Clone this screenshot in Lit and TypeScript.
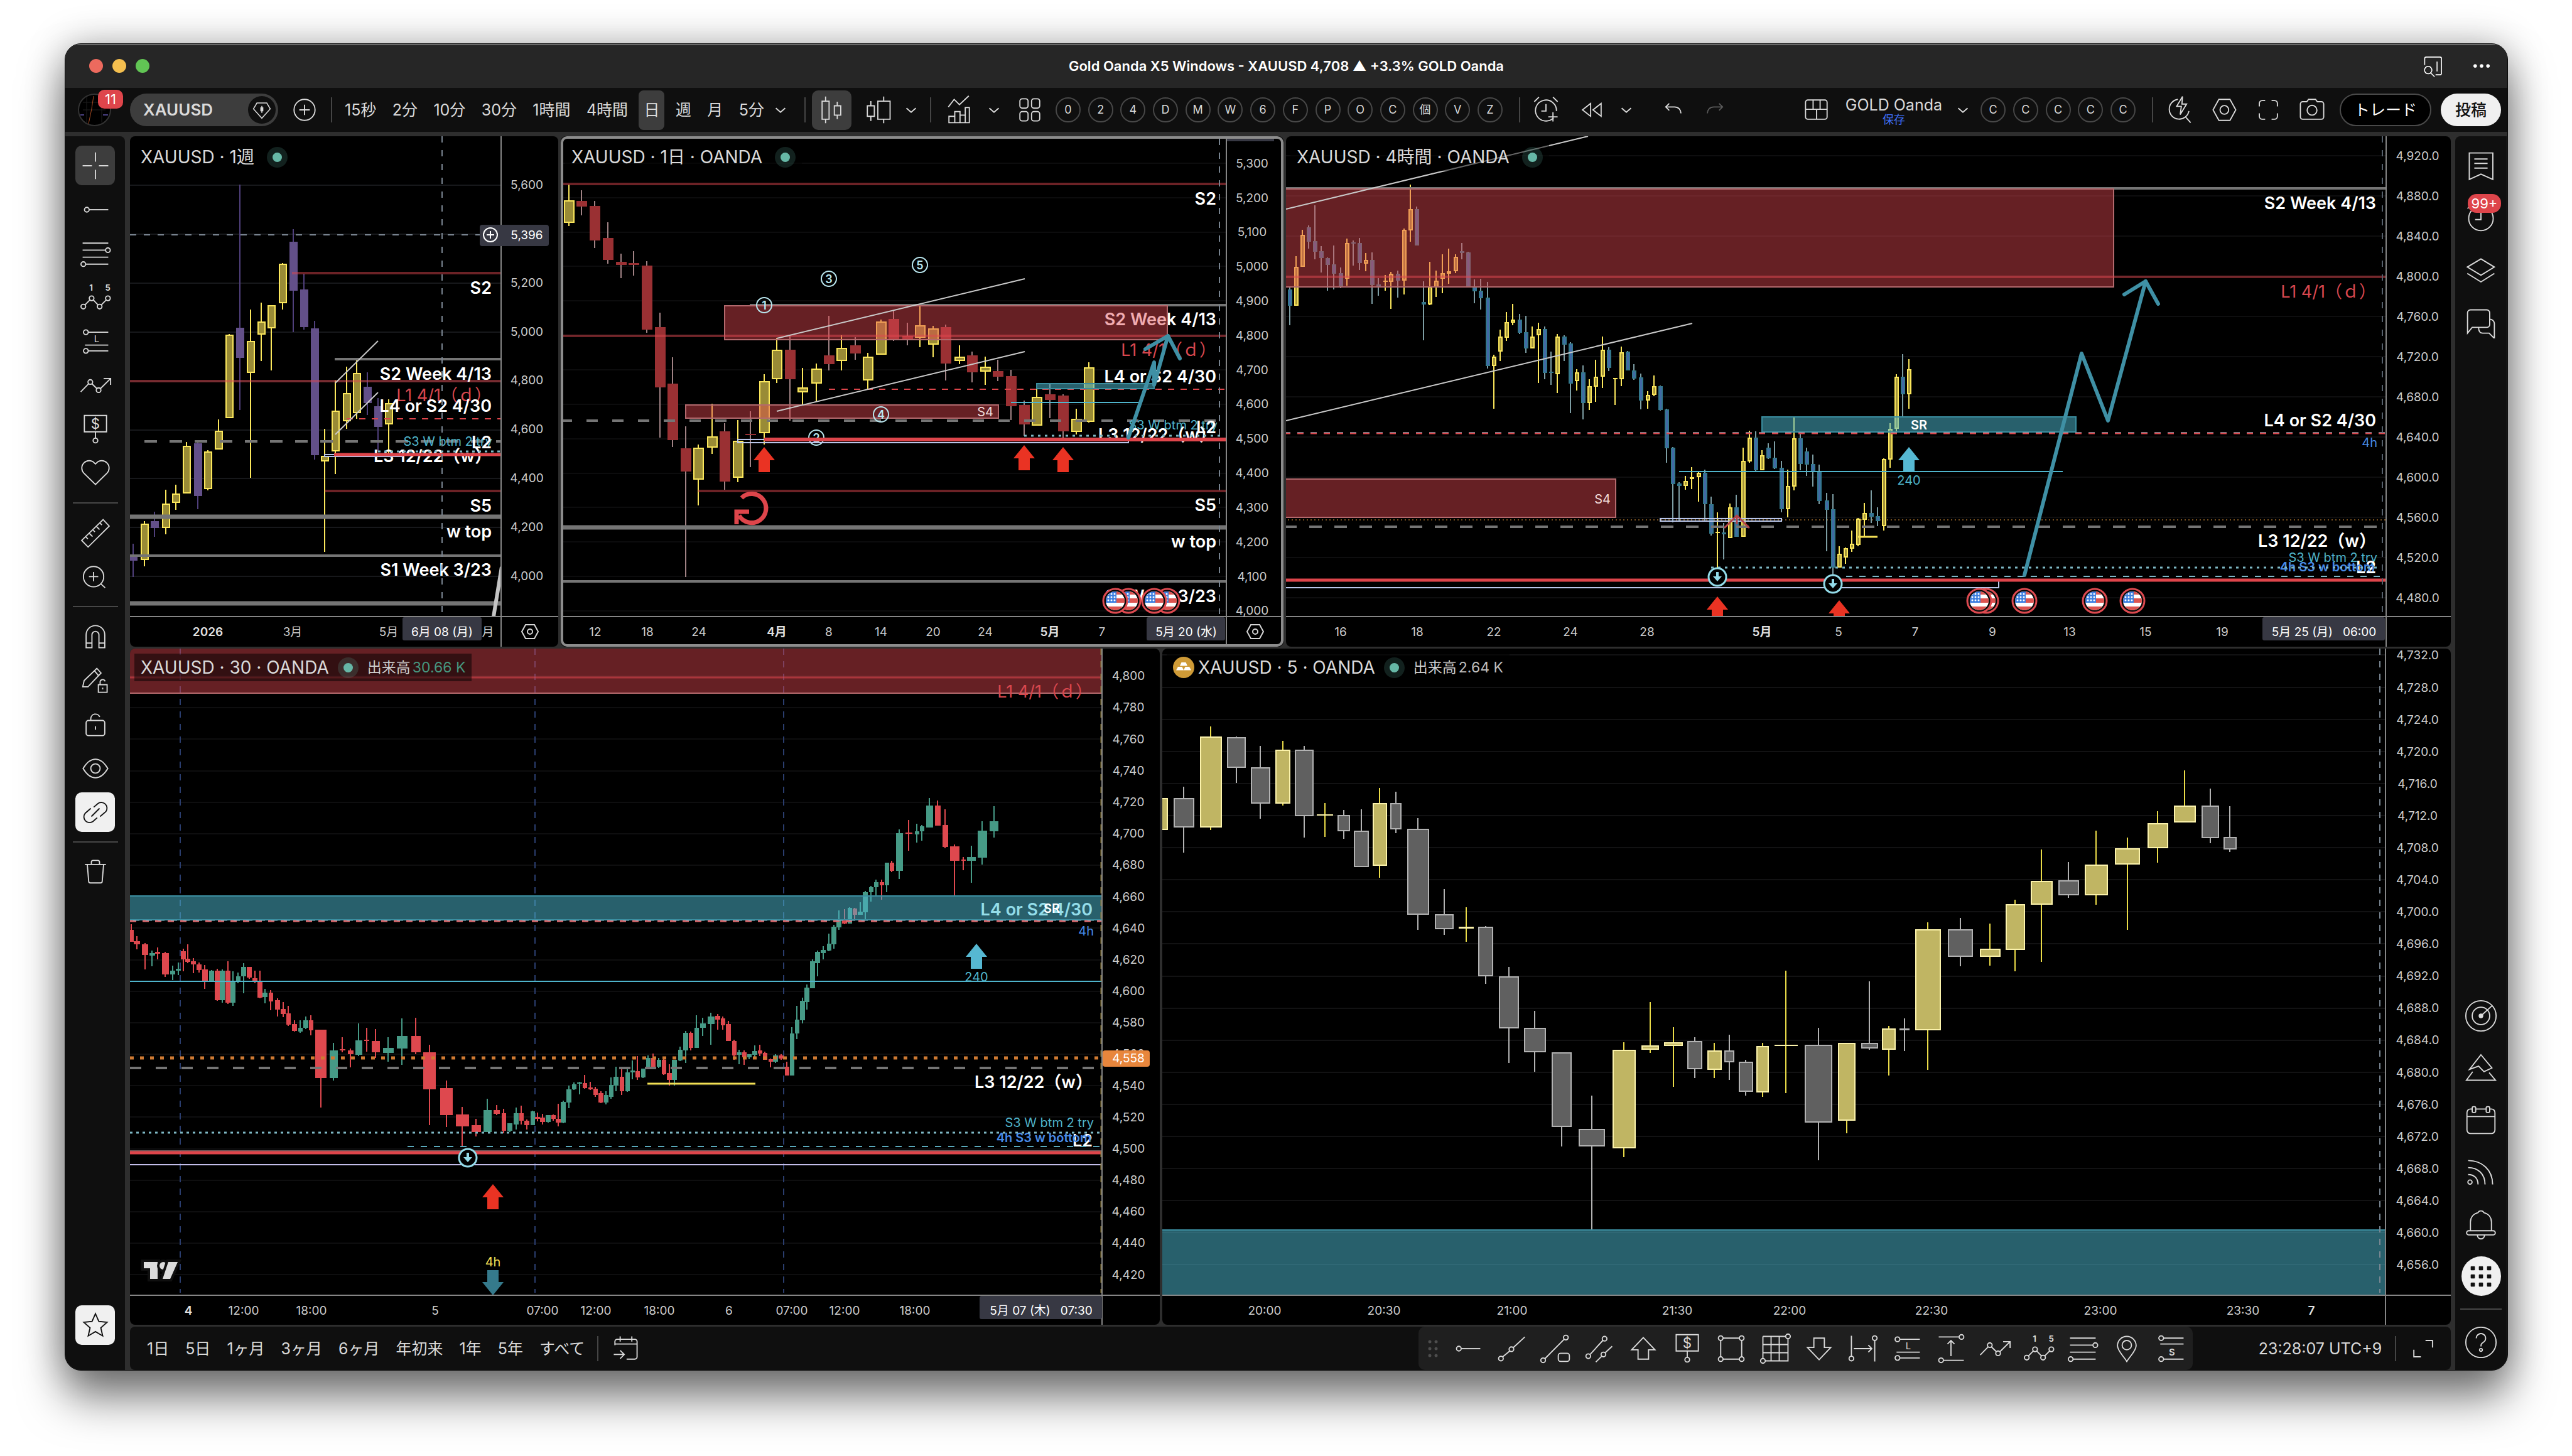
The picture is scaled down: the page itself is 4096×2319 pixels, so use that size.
import { LitElement, html, svg, css, nothing } from "lit";
import { customElement, property } from "lit/decorators.js";
import { classMap } from "lit/directives/class-map.js";

/* ---------- icons (28 unit grid) ---------- */

const dot = (x: number, y: number, r = 2) => svg`<circle cx=${x} cy=${y} r=${r} />`;
const p = (d: string) => svg`<path d=${d} />`;
const glyph = (x: number, y: number, size: number, text: string, weight = 400) =>
  svg`<text class="glyph" x=${x} y=${y} font-size=${size} font-weight=${weight} text-anchor="middle">${text}</text>`;

const ICONS: Record<string, unknown> = {
  cross: p("M3 14h8M17 14h8M14 2.5v8M14 17.5v8"),
  hray: svg`${dot(6.6, 14)}${p("M8.6 14H25")}`,
  fib: svg`${p("M3 5h22M3 11h19.7M3 17h22M5.6 23H25")}${dot(24.7, 11)}${dot(3.6, 23)}`,
  wave: svg`${glyph(10.2, 8, 7, "1", 700)}${glyph(24.6, 8, 7, "5", 700)}${dot(3.6, 21.7)}${dot(10.7, 14.6)}${dot(17.6, 21.7)}${dot(24.7, 14.6)}${p("M5 20.3l4.300-4.300M12.100 16l4.100 4.300M19 20.300l4.300-4.300")}`,
  longPos: svg`${dot(5.8, 6)}${dot(5.8, 22)}${p("M7.8 6H25M5 17h20M7.8 22H25")}${glyph(15, 14.5, 8, "L")}`,
  shortPos: svg`${dot(5.8, 5)}${dot(5.8, 23)}${p("M7.8 5H25M5 10h20M7.8 23H25")}${glyph(15, 20, 8, "S", 600)}`,
  path: svg`${p("M1.400 19.500L8.200 12.500M11 12.500L15.300 16.700M18.200 16.700L27 8M21 8h6v5.500")}${dot(9.6, 11)}${dot(16.7, 18)}`,
  price: svg`${p("M4.500 2h19v14h-19zM14 16v5.500")}${dot(14, 23.5)}${glyph(14, 13.2, 12, "$")}`,
  heart: p("M14 23.500L4.100 13.800a6.200 6.200 0 0 1 9-8.800l.9.9.9-.9a6.200 6.200 0 0 1 9 8.800z"),
  ruler: p("M20.600 2.500l5.200 5.500L7.700 26l-5.500-5.700zM5.500 17l2 2M8.500 14l3 3M11.500 11l2 2M14.500 8l3 3M17.500 5l2 2"),
  zoom: svg`${dot(12.4, 13.7, 8.7)}${p("M12.400 9.700v8M8.400 13.700h8M18.700 20l3.600 3.200")}`,
  magnet: p("M6 23.500V12.500a8 8 0 0 1 16 0v11h-5V12.500a3 3 0 0 0-6 0v11zM6 19.500h5M17 19.500h5"),
  penLock: svg`${p("M3.100 19.300L4.300 14 15.200 3.500l3.600 4L7.600 19.300zM13 5.500l3.700 4.200M16.500 17.500h7.500v6.500h-7.500zM18 17.500v-2a2.200 2.200 0 0 1 4.300-.8M20.200 20v1.500")}`,
  lock: svg`<rect x="6" y="10.500" width="16" height="13" rx="2" />${p("M10 10.500V9a4 4 0 0 1 7.700-1.500M14 15.500v3")}`,
  eye: svg`${p("M3.400 14c3-5 6.500-8 10.600-8s7.600 3 10.600 8c-3 5-6.500 8-10.600 8s-7.600-3-10.600-8z")}${dot(14, 14, 4)}`,
  link: p("M12.500 9.500l3.700-3.200a4.900 4.900 0 0 1 6.700 7L18 17.500M15.500 18.500l-3.700 3.300a4.900 4.900 0 0 1-6.700-7L10 10.500M10.500 17.500l7-7"),
  trash: p("M5 7.500h18M10.500 7.500v-2a1.500 1.500 0 0 1 1.500-1.500h4a1.500 1.500 0 0 1 1.500 1.500v2M7 7.500l1.200 14.300a1.500 1.500 0 0 0 1.500 1.500h8.600a1.500 1.500 0 0 0 1.500-1.500L21 7.500"),
  star: p("M14 4l2.900 6.600 7.100.7-5.400 4.700 1.600 7-6.200-3.700L7.800 23l1.600-7L4 11.300l7.100-.7z"),
  list: p("M4 3h20.200v22.700L14 21.200 4 25.700zM8.300 8.200h11.400M8.300 12h11.400M8.300 16h11.400"),
  clock: svg`${dot(14, 14.5, 10.5)}${p("M14 9v6.500H9M2.500 6l3-3")}`,
  layers: p("M14 4.500L2.300 11.500 14 18.500l11.500-7zM2.300 17L14 24.200 25.500 17"),
  chat: p("M2.500 23.500V6A2.500 2.500 0 0 1 5 3.500h14A2.500 2.500 0 0 1 21.500 6v10a2.500 2.500 0 0 1-2.500 2.500H6.500zM21.500 11.500a4 4 0 0 1 4 3.500v13l-4.500-4.500h-5.500c-2 0-3.500-1.500-3.500-4.500"),
  radar: svg`${dot(14, 14, 13)}${dot(14, 14, 7.5)}<circle cx="14" cy="14" r="2" class="solid" />${p("M14 14l9.500-8.700")}`,
  peak: p("M14 2.700l9.400 11.300-6.800 3.200L12 12.400l-7.800 2.800zM6.900 17.200L1.500 24.500h25L21 18"),
  calendar: svg`<rect x="2" y="4.500" width="24" height="21" rx="3" />${p("M2 11h24")}<rect class="cut" x="6.500" y="2.500" width="3" height="5" rx="1" /><rect class="cut" x="18.500" y="2.500" width="3" height="5" rx="1" />`,
  rss: svg`${dot(4.6, 22.5, 1.8)}${p("M3 16c5 0 8.500 3 8.500 8.500M3 10c8.500 0 14.500 5.500 14.500 14.500M3 4c12 0 21 8 21 20.500")}`,
  bell: p("M14 2.500a2.500 2.500 0 0 1 2.500 1.500c4 1 6.500 4 6.500 8v7.500H5V12c0-4 2.500-7 6.500-8A2.500 2.500 0 0 1 14 2.500zM3.500 19.500h21a1.800 1.800 0 0 1 0 3.600h-21a1.800 1.800 0 0 1 0-3.600zM11 23.500a3 3 0 0 0 6 0"),
  apps: svg`${[7, 14, 21].map((x) => [7, 14, 21].map((y) => svg`<rect class="solid" x=${x - 1.8} y=${y - 1.8} width="3.600" height="3.600" rx="0.600" />`))}`,
  help: svg`${dot(14, 14, 13)}${p("M10 10.500a4 4 0 1 1 6 3.500c-1.500 1-2 1.500-2 3.500")}${dot(14, 20.5, 1.2)}`,
  plus: svg`${dot(14, 14, 9)}${p("M14 9.500v9M9.500 14h9")}`,
  pen: svg`${p("M9 7h10l3.500 6L14 22.500 5.500 13z")}<path class="solid" d="M12.500 11.500h3v4h-3z" />${p("M14 10v7")}`,
  candles: p("M8.500 2.500v4M8.500 22v3.500M5.500 6.500h6v15.500h-6zM18.500 7v3.500M18.500 18v4M16 10.500h5.500v8H16z"),
  candlesWide: p("M8 6.500v4M8 19.500v4M5 10.500h6v9H5zM19 2.500v4M19 21.500v4M14 6.500h10.500v15.500H14z"),
  down: p("M10 12.500l4 3.500 4-3.500"),
  indicators: p("M5 11.500l5-6.500 4.500 4.500 8-7.500M5.500 25v-5.500h5V25zM10.500 20v-4.500h4.500V25M15 18.500h4.500V25M19.500 18.500V12H23v13H5.500"),
  templates: svg`${[5.5, 15.5].map((x) => [4.5, 15.5].map((y) => svg`<rect x=${x} y=${y} width="7" height="8" rx="2" />`))}`,
  alert: svg`${p("M20.500 20.800A9 9 0 1 1 23 15M14 9v6h-4M4 7l4-4M24 7l-4-4M20 16v8M16 20h8")}`,
  rewind: p("M13 8.500L6 14l7 5.500zM22 8.500L15 14l7 5.500z"),
  undo: p("M11.500 8.500L8.500 11.500 11.500 14.500M8.500 11.500h7.500c3.500 0 5.500 2.500 5.500 5.500"),
  redo: p("M16.500 8.500l3 3-3 3M19.500 11.500H12c-3.500 0-5.500 2.500-5.500 5.500"),
  layout: svg`<rect x="4.500" y="5.500" width="18.500" height="16.500" rx="2" />${p("M4.500 13.500h18.500M11 5.500v8M17 5.500v8M14 13.500v8.500")}`,
  quick: p("M12 5a8.500 8.500 0 1 0 9.500 10M18.500 20l4.500 5M16 2.500l-5 8.500h4l-1 7 5.500-9H15.500z"),
  hex: svg`${p("M9.500 5h9.500L24 14l-5 9H9.500L4.500 14z")}${dot(14.2, 14, 3.7)}`,
  full: p("M6.500 11V8.500a2.500 2.500 0 0 1 2.500-2.500h2.500M17 6h2.500A2.500 2.500 0 0 1 22 8.500V11M22 17v2.500a2.500 2.500 0 0 1-2.500 2.500H17M11.500 22H9a2.500 2.500 0 0 1-2.500-2.500V17"),
  camera: svg`${p("M6 7h3.500l1.500-2h6l1.500 2H22a2 2 0 0 1 2 2v11a2 2 0 0 1-2 2H6a2 2 0 0 1-2-2V9a2 2 0 0 1 2-2z")}${dot(14, 14.3, 4.2)}`,
  goto: p("M5 11V8a2 2 0 0 1 2-2h15a2 2 0 0 1 2 2v13a2 2 0 0 1-2 2h-7M5 10h19M9.500 3.500V8M19.500 3.500V8M4 19h9M9.500 15.500l3.500 3.500-3.500 3.500"),
  trend: svg`${dot(5, 22.5)}${dot(14, 14.5)}${p("M6.500 21L12.600 16M15.500 13.200L25.500 4")}`,
  trendBox: svg`${dot(3.5, 24)}${dot(23, 4.500)}${p("M5 22.600L21.500 6")}<rect x="16.500" y="18" width="9.500" height="7" rx="2" />`,
  channel: svg`${dot(4.5, 20.5)}${dot(18.5, 5.500)}${dot(17.5, 19)}${p("M6 19L17 7M11 25.500l5-5M19 17.500l6-5.500")}`,
  up: p("M14 4.500L24 15h-5.500v8h-9v-8H4z"),
  downArrow: p("M14 23.500L24 13h-5.500V5h-9v8H4z"),
  rect: svg`${dot(5, 5)}${dot(23, 5)}${dot(5, 23)}${dot(23, 23)}${p("M7 5h14M7 23h14M5 7v14M23 7v14")}`,
  grid: svg`${p("M3.500 3.500h19.500M3.500 3.500V22.500M5.500 24.500H25V5.500M10.500 3.500v21M17.500 3.500v21M3.500 10.500H25M3.500 17.500H25")}${dot(25, 3.500)}${dot(3.5, 24.5)}`,
  range: svg`${dot(4, 22.500)}${dot(24, 5)}${p("M4 3v17.500M24 7v18M6 14h15M18.500 11l3 3-3 3")}`,
  vrange: svg`${dot(23, 4)}${dot(5.500, 24)}${p("M3.500 4h17.500M7.500 24H25M14 20.500V7M11 10l3-3 3 3")}`,
  pin: svg`${p("M14 25c-3-5-8-9-8-13.500a8 8 0 0 1 16 0C22 16 17 20 14 25z")}${dot(14, 11, 4)}`,
  corner: p("M16 7h6v6M12 21H6v-6"),
  tabSearch: p("M6 13V6.500A1.500 1.500 0 0 1 7.500 5h14A1.500 1.500 0 0 1 23 6.500v15a1.500 1.500 0 0 1-1.500 1.500H17M18.500 9.500v10M9.500 14.500a3.700 3.700 0 1 0 .1 0M12 21l4 4"),
};

const icon = (name: string, cls = "") => html`<svg class="icon ${cls}" viewBox="0 0 28 28" aria-hidden="true">${ICONS[name]}</svg>`;

const iconStyles = css`
  .icon { width: 52px; height: 52px; display: block; fill: none; stroke: currentColor; flex: none; }
  .icon .solid { fill: currentColor; stroke: none; }
  .icon .cut { fill: #0f0f0f; }
  .icon .glyph { fill: currentColor; stroke: none; font-family: Inter, sans-serif; }
  button { font: inherit; color: inherit; background: none; border: 0; padding: 0; margin: 0; display: flex; align-items: center; justify-content: center; cursor: pointer; }
`;

/* ---------- chart model ---------- */

interface Scale { x0: number; kx: number; y0: number; ky: number }
const TOP = { y0: 212.2, ky: 0.52952 };
const LOW = { y0: 1024, ky: 0.74719 };
const A1: Scale = { x0: 101.5, kx: 0.50598, ...TOP };
const A2: Scale = { x0: 885.6, kx: 0.37066, ...TOP };
const A3: Scale = { x0: 1448.4, kx: 0.3883, ...TOP };
const A4: Scale = { x0: 2038.8, kx: 0.61776, ...TOP };
const A5: Scale = { x0: 2979.7, kx: 0.65306, ...TOP };
const B1: Scale = { x0: 101.5, kx: 0.55892, ...LOW };
const B2: Scale = { x0: 968.6, kx: 0.56481, ...LOW };
const B3: Scale = { x0: 1845, kx: 0.70601, ...LOW };
const B4: Scale = { x0: 2933.6, kx: 0.69424, ...LOW };

type Pt = [Scale, number, number];
const X = (s: Scale, x: number) => Math.round(s.x0 + s.kx * x);
const Y = (s: Scale, y: number) => Math.round(s.y0 + s.ky * y);

interface Ink { fill: string; edge: string; wick: string }
interface Palette { up: Ink; down: Ink }
/* one candle: centre, high, body top, body bottom, low, rising?, body width */
type Candle = number[];

const candles = (s: Scale, pal: Palette, width: number, rows: Candle[]) =>
  rows.map(([x, hi, top, bot, lo, up, w]) => {
    const ink = up ? pal.up : pal.down;
    const cx = X(s, x);
    const bw = Math.max(4, Math.round((w ?? width) * s.kx));
    const y1 = Y(s, top);
    const h = Math.max(2, Y(s, bot) - y1);
    const left = Math.round(cx - bw / 2);
    return svg`<rect x=${cx - 1} y=${Y(s, hi)} width="2" height=${Math.max(1, Y(s, lo) - Y(s, hi))} fill=${ink.wick} />
      <rect x=${left} y=${y1} width=${bw} height=${h} fill=${ink.edge} />
      ${h > 4 && bw > 5 ? svg`<rect x=${left + 2} y=${y1 + 2} width=${bw - 4} height=${h - 4} fill=${ink.fill} />` : nothing}`;
  });

const seg = (a: Pt, b: Pt, color: string, w: number, dash = "") =>
  svg`<line x1=${X(a[0], a[1])} y1=${Y(a[0], a[2])} x2=${X(b[0], b[1])} y2=${Y(b[0], b[2])} stroke=${color} stroke-width=${w} stroke-dasharray=${dash || "none"} />`;
const zone = (a: Pt, b: Pt, fill: string, edge: string) =>
  svg`<rect x=${X(a[0], a[1])} y=${Y(a[0], a[2])} width=${X(b[0], b[1]) - X(a[0], a[1])} height=${Y(b[0], b[2]) - Y(a[0], a[2])} fill=${fill} stroke=${edge} stroke-width="2" />`;
const label = (at: Pt, text: string, cls: string) =>
  svg`<text x=${X(at[0], at[1])} y=${Y(at[0], at[2])} class=${cls}>${text}</text>`;
const poly = (pts: Pt[], color: string, w: number) =>
  svg`<polyline points=${pts.map(([s, x, y]) => `${X(s, x)},${Y(s, y)}`).join(" ")} fill="none" stroke=${color} stroke-width=${w} stroke-linejoin="round" stroke-linecap="round" />`;
const arrow = (at: Pt, color: string, dir = 1) => {
  const x = X(at[0], at[1]);
  const y = Y(at[0], at[2]);
  return svg`<path fill=${color} d=${`M${x} ${y}l17 ${21 * dir}h-8v${19 * dir}h-18v${-19 * dir}h-8z`} />`;
};
const numbered = (at: Pt, n: string) => {
  const x = X(at[0], at[1]);
  const y = Y(at[0], at[2]);
  return svg`<circle cx=${x} cy=${y} r="12" fill="none" stroke="#b9e6ee" stroke-width="2" /><text x=${x} y=${y} class="num">${n}</text>`;
};
const marker = (at: Pt) => {
  const x = X(at[0], at[1]);
  const y = Y(at[0], at[2]);
  return svg`<circle cx=${x} cy=${y} r="14" fill="#000" stroke="#93dbe9" stroke-width="3" /><path fill="#93dbe9" d=${`M${x - 2} ${y - 8}h4v7h5l-7 8-7-8h5z`} />`;
};
const flag = (at: Pt) =>
  svg`<g transform=${`translate(${X(at[0], at[1])} ${Y(at[0], at[2])})`}>
    <circle r="19" fill="#0c0c0c" stroke="#de4a50" stroke-width="3" />
    <g clip-path="url(#disc)"><rect x="-16" y="-16" width="32" height="32" fill="#fff" /><path d="M-16-16h32v6h-32zM-16-4h32v7h-32zM-16 9h32v8h-32z" fill="#dc5450" /><path d="M-16-16h18v19h-18z" fill="#3d7fe0" />
    ${[-11, -6, -1].map((x) => [-11, -6, -1].map((y) => svg`<circle cx=${x} cy=${y} r="1.500" fill="#fff" />`))}</g></g>`;
const hexagon = (at: Pt) => {
  const x = X(at[0], at[1]);
  const y = Y(at[0], at[2]);
  return svg`<path d=${`M${x - 7} ${y - 11}h14l6 11-6 11h-14l-6-11z`} fill="none" stroke="#d6d6d6" stroke-width="2" /><circle cx=${x} cy=${y} r="4" fill="none" stroke="#d6d6d6" stroke-width="2" />`;
};
const tag = (a: Pt, b: Pt, text: string) => {
  const x1 = X(a[0], a[1]);
  const x2 = X(b[0], b[1]);
  const y1 = Y(a[0], a[2]);
  const y2 = Y(b[0], b[2]);
  return svg`<rect x=${x1} y=${y1} width=${x2 - x1} height=${y2 - y1} rx="3" fill="#373843" /><text x=${Math.round((x1 + x2) / 2)} y=${Math.round((y1 + y2) / 2) + 4} class="ax hot">${text}</text>`;
};

const RED_LINE = "rgba(226,71,79,.48)";
const RED_ZONE = "rgba(226,71,79,.45)";
const RED_EDGE = "#b3696d";
const TEAL_ZONE = "rgba(77,184,208,.52)";
const TEAL_EDGE = "#3b8ea0";
const TEAL = "#4fb4cb";
const GRAY = "#757575";
const CROSS = "#78838f";
const CHAN = "#c9c9c9";
const SOLID_RED = "#de454b";
const PALE = "#b9c6ea";
const ARROW_RED = "#ea3323";
const PROJ = "#3f90a5";

interface ChartSpec {
  view: number[];
  axis: Pt;
  scale: Scale;
  right: Scale;
  gridLeft: Pt;
  gridStep: [number, number, number];
  gridTone: string;
  prices: string[];
  priceAt: [number, number, number];
  times: [Scale, number, string, number?][];
  timeY: number;
  body: () => unknown;
  over?: () => unknown;
}

const price = (from: number, to: number, step: number, digits = 0) => {
  const out: string[] = [];
  for (let v = from; v >= to; v -= step) out.push(v.toLocaleString("en-US", { minimumFractionDigits: digits, maximumFractionDigits: digits }));
  return out;
};

/* ---------- weekly ---------- */

const WEEK: Palette = {
  up: { fill: "#998b36", edge: "#fbe75c", wick: "#fbe75c" },
  down: { fill: "#635089", edge: "#635089", wick: "#50407c" },
};
const WEEK_ROWS: Candle[] = [
  [219, 1235, 1275, 1286, 1335, 0], [253, 1166, 1174, 1284, 1303, 1], [286, 1138, 1166, 1188, 1213, 0], [321, 1073, 1113, 1188, 1207, 1],
  [353, 1058, 1084, 1112, 1132, 1], [386, 929, 941, 1084, 1084, 1], [421, 929, 933, 1091, 1131, 0], [454, 953, 958, 1071, 1075, 1],
  [487, 861, 894, 951, 951, 1], [521, 604, 606, 857, 857, 1], [554, 155, 585, 676, 833, 0], [587, 530, 624, 721, 1037, 1],
  [622, 510, 566, 606, 686, 1], [654, 517, 517, 587, 713, 1], [689, 390, 392, 512, 530, 1], [722, 289, 326, 474, 599, 0],
  [755, 422, 470, 584, 591, 0], [789, 564, 587, 969, 981, 0], [822, 890, 970, 988, 1260, 1], [855, 744, 835, 958, 1026, 1],
  [890, 702, 782, 866, 890, 1], [922, 678, 721, 841, 859, 1], [955, 720, 763, 812, 848, 0], [990, 796, 821, 883, 958, 0], [1023, 801, 812, 875, 970, 1],
];
const weekly: ChartSpec = {
  view: [207, 217, 682, 813], scale: A1, right: A1, axis: [A1, 1377, 1454], gridLeft: [A1, 208, 0],
  gridStep: [157, 147, 9], gridTone: "#17181b", prices: ["5,600", "", ...price(5200, 4000, 200)], priceAt: [1458, 155, 146.900],
  times: [[A1, 454, "2026", 1], [A1, 721, "3月"], [A1, 1022, "5月"], [A1, 1335, "月"]], timeY: 1499,
  body: () => svg`
    ${candles(A1, WEEK, 26, WEEK_ROWS)}
    ${seg([A1, 719, 421], [A1, 1377, 421], RED_LINE, 4)}${seg([A1, 852, 679], [A1, 1377, 679], GRAY, 4)}
    ${seg([A1, 208, 745], [A1, 1377, 745], RED_LINE, 4)}
    ${seg([A1, 890, 859], [A1, 1377, 859], SOLID_RED, 2, "10 10")}${seg([A1, 253, 926], [A1, 1377, 926], GRAY, 4, "20 20")}
    ${seg([A1, 822, 1077], [A1, 1377, 1077], RED_LINE, 4)}
    ${seg([A1, 208, 1153], [A1, 1377, 1153], GRAY, 7)}${seg([A1, 208, 1271], [A1, 1377, 1271], GRAY, 4)}${seg([A1, 208, 1415], [A1, 1377, 1415], GRAY, 7)}
    ${seg([A1, 1353, 1454], [A1, 1379, 1305], "#c4c4c4", 6)}
    ${seg([A1, 855, 751], [A1, 990, 624], CHAN, 2)}${seg([A1, 855, 907], [A1, 990, 779], CHAN, 2)}
    ${label([A1, 1346, 465], "S2", "mark")}${label([A1, 1346, 723], "S2 Week 4/13", "mark")}${label([A1, 1346, 788], "L1 4/1（ｄ）", "mark red")}
    ${label([A1, 1346, 820], "L4 or S2 4/30", "mark")}${label([A1, 1349, 926], "S3 W btm 2 try", "note teal")}${label([A1, 1346, 928], "L2", "mark")}
    ${label([A1, 1346, 970], "L3 12/22（w）", "mark")}${label([A1, 1346, 1120], "S5", "mark")}${label([A1, 1346, 1196], "w top", "mark")}
    ${label([A1, 1346, 1312], "S1 Week 3/23", "mark")}
    ${seg([A1, 990, 958], [A1, 1377, 958], "#7fb9c6", 3, "4 6")}${zone([A1, 822, 966], [A1, 1067, 972], "none", PALE)}
    ${seg([A1, 850, 967], [A1, 1377, 967], SOLID_RED, 5)}
    ${seg([A1, 1190, 10], [A1, 1190, 1446], CROSS, 2, "10 12")}${seg([A1, 208, 306], [A1, 1309, 306], CROSS, 2, "10 12")}`,
  over: () => svg`
    ${tag([A1, 1067, 1455], [A1, 1315, 1526], "6月 08 (月)")}
    <rect x=${X(A1, 1309)} y=${Y(A1, 275)} width="110" height="34" rx="4" fill="#373843" />
    ${label([A1, 1458, 306], "5,396", "ax hot")}
    <circle cx=${X(A1, 1342)} cy=${Y(A1, 306)} r="11" fill="none" stroke="#fff" stroke-width="2" />
    <path d=${`M${X(A1, 1342) - 6} ${Y(A1, 306)}h12m-6-6v12`} stroke="#fff" stroke-width="2" />
    ${hexagon([A1, 1467, 1500])}`,
};

/* ---------- daily ---------- */

const DAY: Palette = {
  up: { fill: "#998b36", edge: "#fbe75c", wick: "#fbe75c" },
  down: { fill: "#9a3033", edge: "#9a3033", wick: "#a08284" },
};
const DAY_A: Candle[] = [
  [54, 155, 202, 270, 280, 1], [109, 171, 204, 221, 247, 0], [166, 204, 218, 322, 345, 0], [221, 268, 315, 382, 392, 0], [278, 362, 387, 397, 436, 0],
  [333, 355, 390, 397, 429, 0], [390, 385, 399, 591, 601, 0], [445, 540, 584, 765, 916, 0], [500, 674, 754, 923, 943, 0], [557, 882, 948, 1017, 1335, 0],
  [612, 936, 946, 1042, 1120, 1], [669, 814, 912, 946, 965, 1], [724, 873, 897, 1047, 1073, 0], [781, 862, 925, 1037, 1049, 1], [836, 836, 904, 908, 1005, 0],
  [893, 725, 746, 902, 937, 1], [948, 615, 652, 740, 751, 1], [1005, 610, 652, 739, 864, 0], [1060, 706, 765, 779, 815, 1], [1117, 693, 707, 754, 808, 1],
  [1172, 549, 669, 695, 713, 0], [1227, 608, 645, 685, 714, 1], [1284, 613, 638, 662, 681, 0], [1339, 660, 671, 744, 770, 1], [1396, 561, 566, 666, 666, 1],
  [1451, 534, 558, 619, 624, 0], [1508, 570, 610, 620, 638, 0],
];
const DAY_B: Candle[] = [
  [42, 513, 577, 616, 643, 1], [97, 580, 587, 636, 674, 1], [149, 575, 584, 693, 744, 0], [204, 638, 671, 686, 695, 1], [256, 657, 669, 720, 749, 0],
  [311, 671, 702, 718, 756, 1], [363, 681, 716, 733, 746, 0], [415, 711, 730, 821, 862, 0], [470, 805, 817, 876, 909, 0], [522, 770, 793, 880, 880, 1],
  [577, 752, 786, 803, 857, 0], [629, 786, 789, 896, 916, 0], [684, 829, 859, 899, 906, 1], [736, 688, 704, 868, 871, 1],
];
const daily: ChartSpec = {
  view: [893, 217, 1151, 813], scale: A2, right: A3, axis: [A3, 1299, 1454], gridLeft: [A2, 20, 0],
  gridStep: [90, 103.600, 14], gridTone: "#0c0c0d", prices: price(5300, 4000, 100), priceAt: [1405, 90, 103.500],
  times: [[A2, 167, "12"], [A2, 391, "18"], [A2, 613, "24"], [A2, 948, "4月", 1], [A2, 1172, "8"], [A2, 1396, "14"], [A3, 97, "20"], [A3, 310, "24"], [A3, 577, "5月", 1], [A3, 789, "7"]], timeY: 1499,
  body: () => svg`
    ${candles(A2, DAY, 45, DAY_A)}${candles(A3, DAY, 43, DAY_B)}
    ${label([A3, 1258, 559], "S2 Week 4/13", "mark")}
    ${seg([A2, 20, 153], [A3, 1299, 153], RED_LINE, 4)}${seg([A2, 833, 517], [A3, 1299, 517], GRAY, 4)}
    ${zone([A2, 724, 519], [A3, 1058, 620], RED_ZONE, RED_EDGE)}${seg([A2, 20, 609], [A3, 1299, 609], RED_LINE, 4)}
    ${zone([A2, 557, 817], [A3, 364, 857], RED_ZONE, RED_EDGE)}${seg([A2, 1172, 770], [A3, 1299, 770], SOLID_RED, 2, "10 10")}
    ${seg([A2, 20, 865], [A3, 1299, 865], GRAY, 4, "18 23")}${seg([A2, 610, 1077], [A3, 1299, 1077], RED_LINE, 4)}
    ${seg([A2, 20, 1185], [A3, 1299, 1185], GRAY, 7)}${seg([A2, 20, 1348], [A3, 1299, 1348], GRAY, 4)}
    ${seg([A2, 948, 618], [A3, 472, 438], CHAN, 2)}${seg([A2, 948, 837], [A3, 472, 657], CHAN, 2)}
    ${label([A3, 1258, 196], "S2", "mark")}${label([A3, 1258, 652], "L1 4/1（ｄ）", "mark red")}${label([A3, 1258, 730], "L4 or S2 4/30", "mark")}
    ${label([A3, 1264, 877], "S3 W btm 2 try", "note teal")}${label([A3, 1258, 884], "L2", "mark")}${label([A3, 1258, 906], "L3 12/22（w）", "mark")}
    ${label([A3, 1258, 1118], "S5", "mark")}${label([A3, 1258, 1228], "w top", "mark")}${label([A3, 1258, 1391], "S1 Week 3/23", "mark")}
    ${label([A3, 345, 838], "S4", "note pale")}
    ${zone([A3, 522, 753], [A3, 1003, 768], TEAL_ZONE, TEAL_EDGE)}${seg([A3, 415, 810], [A3, 949, 810], TEAL, 2)}
    ${seg([A3, 470, 909], [A3, 1280, 909], "#7fb9c6", 3, "4 7")}
    ${numbered([A2, 893, 517], "1")}${numbered([A2, 1117, 916], "2")}${numbered([A2, 1172, 437], "3")}${numbered([A2, 1396, 845], "4")}${numbered([A3, 42, 396], "5")}
    ${zone([A2, 781, 922], [A3, 899, 930], "none", PALE)}${seg([A2, 893, 921], [A3, 1299, 921], SOLID_RED, 6)}
    ${poly([[A3, 899, 915], [A3, 1004, 688], [A3, 1004, 756], [A3, 1059, 610]], PROJ, 6)}${poly([[A3, 968, 649], [A3, 1059, 610], [A3, 1110, 677]], PROJ, 6)}
    ${arrow([A2, 893, 943], ARROW_RED)}${arrow([A3, 470, 939], ARROW_RED)}${arrow([A3, 629, 943], ARROW_RED)}
    <path d=${`M${X(A2, 796)} ${Y(A2, 1096)}A23 23 0 1 1 ${X(A2, 785)} ${Y(A2, 1150)}M${X(A2, 775)} ${Y(A2, 1176)}V${Y(A2, 1139)}H${X(A2, 829)}`} fill="none" stroke=${SOLID_RED} stroke-width="7" />
    ${seg([A3, 1271, 16], [A3, 1271, 1446], CROSS, 2, "10 12")}
    ${flag([A3, 897, 1407])}${flag([A3, 843, 1407])}${flag([A3, 1057, 1407])}${flag([A3, 1004, 1407])}`,
  over: () => svg`
    <rect x=${X(A3, 1302)} y="219" width="75" height="6" fill="#373843" />
    ${tag([A3, 972, 1455], [A3, 1294, 1526], "5月 20 (水)")}${hexagon([A3, 1418, 1500])}
    <rect x="895" y="219" width="1147" height="809" rx="8" fill="none" stroke="#8c8c8c" stroke-width="4" />`,
};

/* ---------- four hours ---------- */

const HOURS: Palette = {
  up: { fill: "#a2933a", edge: "#fbe75c", wick: "#fbe75c" },
  down: { fill: "#4169a6", edge: "#33788c", wick: "#7d9da3" },
};
const HOURS_A: Candle[] = [
  [24, 463, 470, 519, 578, 0], [40, 369, 401, 519, 519, 1], [57, 291, 305, 402, 402, 1], [73, 277, 282, 326, 348, 0], [89, 216, 324, 357, 380, 0],
  [106, 340, 355, 376, 418, 0], [122, 374, 375, 397, 474, 0], [138, 338, 395, 423, 470, 0], [155, 404, 420, 460, 467, 0], [172, 317, 331, 437, 458, 1],
  [188, 322, 329, 332, 398, 0], [205, 315, 331, 390, 411, 0], [221, 361, 382, 392, 416, 1], [237, 359, 382, 456, 514, 0], [253, 436, 455, 462, 488, 0],
  [270, 427, 444, 448, 474, 1], [286, 417, 422, 448, 528, 1], [303, 413, 422, 444, 495, 0], [320, 286, 291, 444, 485, 1], [336, 155, 228, 293, 326, 1],
  [352, 221, 228, 338, 338, 0], [369, 446, 507, 516, 622, 0], [385, 387, 463, 516, 517, 1], [401, 413, 443, 465, 493, 1], [418, 364, 420, 437, 481, 1],
  [434, 347, 416, 422, 453, 1], [452, 364, 371, 416, 420, 1], [468, 331, 355, 360, 380, 0], [485, 356, 359, 463, 463, 0], [501, 439, 463, 476, 512, 0],
  [517, 437, 474, 497, 531, 0], [535, 448, 495, 700, 708, 0], [551, 666, 671, 700, 828, 1], [567, 591, 612, 656, 685, 1], [583, 537, 568, 615, 625, 1],
  [600, 514, 561, 570, 577, 1], [617, 544, 561, 601, 603, 0], [633, 549, 599, 648, 660, 0], [650, 582, 612, 648, 648, 1], [666, 570, 589, 608, 752, 1],
  [682, 582, 589, 721, 740, 0], [698, 657, 718, 721, 756, 0], [715, 603, 612, 724, 781, 1], [732, 608, 612, 636, 686, 0], [748, 629, 632, 753, 841, 0],
  [764, 709, 720, 746, 774, 1], [781, 699, 720, 811, 861, 0], [797, 740, 761, 811, 833, 1], [813, 681, 732, 763, 808, 1], [830, 612, 652, 733, 766, 1],
  [847, 643, 652, 706, 716, 0], [863, 737, 737, 740, 817, 1], [879, 642, 659, 740, 760, 1], [896, 655, 657, 713, 714, 0], [912, 695, 713, 738, 742, 0],
  [930, 722, 735, 805, 831, 0], [947, 775, 787, 805, 828, 1], [963, 728, 761, 787, 790, 1], [980, 758, 761, 832, 835, 0], [996, 829, 831, 948, 992, 0],
  [1012, 944, 946, 1056, 1171, 0], [1028, 1050, 1054, 1061, 1166, 0], [1045, 1031, 1045, 1061, 1073, 1], [1061, 1004, 1034, 1040, 1071, 1], [1078, 1018, 1021, 1035, 1108, 1],
  [1095, 1012, 1021, 1116, 1166, 0], [1111, 1094, 1115, 1204, 1211, 0], [1127, 1141, 1198, 1202, 1307, 1], [1143, 1172, 1200, 1207, 1282, 0], [1160, 1113, 1125, 1218, 1218, 1],
  [1176, 1087, 1125, 1213, 1214, 0], [1193, 946, 986, 1213, 1213, 1], [1210, 894, 915, 988, 991, 1], [1226, 897, 915, 1014, 1018, 0], [1242, 953, 968, 1014, 1014, 1],
  [1258, 932, 946, 977, 979, 0], [1275, 927, 976, 1008, 1010, 0], [1292, 986, 1007, 1131, 1141, 0], [1308, 1012, 1061, 1131, 1155, 1], [1324, 853, 918, 1063, 1075, 1],
  [1341, 905, 918, 995, 1013, 0], [1357, 946, 958, 997, 1030, 0], [1373, 967, 994, 1019, 1062, 0], [1390, 996, 1018, 1106, 1115, 0], [1408, 1082, 1105, 1132, 1258, 0],
  [1425, 1085, 1131, 1307, 1330, 0], [1441, 1242, 1265, 1307, 1307, 1], [1457, 1246, 1248, 1277, 1296, 1], [1473, 1195, 1235, 1249, 1260, 1], [1490, 1157, 1160, 1238, 1242, 1],
  [1506, 1112, 1143, 1162, 1213, 1], [1523, 1075, 1143, 1153, 1172, 0], [1539, 1125, 1152, 1166, 1182, 0], [1556, 977, 979, 1181, 1195, 1],
];
const HOURS_B: Candle[] = [[46, 873, 889, 981, 1007, 1], [62, 725, 732, 890, 898, 1], [77, 664, 732, 786, 852, 0], [93, 679, 710, 786, 828, 1]];
const fourHours: ChartSpec = {
  view: [2048, 217, 1855, 813], scale: A4, right: A5, axis: [A5, 1256, 1454], gridLeft: [A4, 10, 0],
  gridStep: [68, 120.900, 12], gridTone: "#0e0e0f", prices: price(4920, 4480, 40, 1), priceAt: [1332, 67, 120.900],
  times: [[A4, 155, "16"], [A4, 353, "18"], [A4, 551, "22"], [A4, 748, "24"], [A4, 946, "28"], [A4, 1242, "5月", 1], [A4, 1440, "5"], [A5, 108, "7"], [A5, 296, "9"], [A5, 484, "13"], [A5, 670, "15"], [A5, 857, "19"]], timeY: 1499,
  body: () => svg`
    ${seg([A4, 10, 1163], [A5, 1256, 1163], "#7a5220", 2, "2 4")}
    ${candles(A4, HOURS, 12, HOURS_A)}${candles(A5, HOURS, 11, HOURS_B)}
    ${seg([A4, 10, 166], [A5, 1256, 166], GRAY, 4)}${zone([A4, 0, 168], [A5, 592, 463], RED_ZONE, RED_EDGE)}
    ${seg([A4, 10, 433], [A5, 1256, 433], RED_LINE, 4)}
    ${zone([A4, 0, 1040], [A4, 864, 1155], RED_ZONE, RED_EDGE)}
    ${seg([A4, 10, 1183], [A5, 1256, 1183], GRAY, 4, "20 20")}
    ${seg([A4, 15, 228], [A4, 793, 10], CHAN, 2)}${seg([A4, 15, 864], [A4, 1062, 572], CHAN, 2)}
    ${zone([A4, 980, 1159], [A4, 1292, 1166], "none", PALE)}${seg([A4, 1029, 1017], [A5, 467, 1017], TEAL, 2)}
    ${zone([A4, 1242, 854], [A5, 499, 899], TEAL_ZONE, TEAL_EDGE)}
    ${seg([A4, 10, 902], [A5, 1256, 902], SOLID_RED, 3, "10 11")}${seg([A4, 10, 900], [A5, 1256, 900], "#7db8c8", 1, "10 11")}
    ${poly([[A4, 1146, 1185], [A4, 1177, 1150], [A4, 1208, 1185]], "#b4424a", 3)}${seg([A4, 1177, 1150], [A4, 1177, 1176], "#b4424a", 3)}
    ${seg([A4, 1490, 1213], [A4, 1540, 1213], "#f2df55", 3)}
    ${label([A5, 1231, 210], "S2 Week 4/13", "mark")}${label([A5, 1231, 476], "L1 4/1（ｄ）", "mark red")}${label([A5, 1231, 863], "L4 or S2 4/30", "mark")}
    ${label([A5, 1235, 931], "4h", "note blue")}${label([A5, 1231, 1225], "L3 12/22（w）", "mark")}${label([A5, 1235, 1276], "S3 W btm 2 try", "note teal")}
    ${label([A5, 1231, 1305], "L2", "mark")}${label([A5, 1229, 1305], "4h S3 w bottom", "note blue bold")}
    ${label([A4, 852, 1100], "S4", "note pale")}${label([A5, 117, 877], "SR", "note mid bold")}
    ${seg([A4, 1111, 1306], [A5, 1244, 1306], "#7fb9c6", 3, "4 7")}${seg([A4, 1425, 1332], [A5, 1256, 1332], "#7db8c8", 2, "10 11")}
    ${poly([[A4, 0, 1367], [A5, 311, 1367], [A5, 311, 1345]], PALE, 2)}${seg([A4, 10, 1345], [A5, 1256, 1345], SOLID_RED, 5)}
    ${marker([A4, 1127, 1335])}${marker([A4, 1425, 1356])}${arrow([A4, 1127, 1394], ARROW_RED)}${arrow([A4, 1441, 1404], ARROW_RED)}
    ${arrow([A5, 93, 944], "#56b8d2")}${label([A5, 93, 1044], "240", "note teal mid")}
    ${poly([[A5, 374, 1329], [A5, 514, 662], [A5, 577, 864], [A5, 670, 445]], PROJ, 6)}${poly([[A5, 618, 485], [A5, 670, 445], [A5, 700, 513]], PROJ, 6)}
    ${seg([A5, 1247, 10], [A5, 1247, 1446], "#56606c", 2, "10 12")}
    ${flag([A5, 280, 1407])}${flag([A5, 264, 1407])}${flag([A5, 374, 1407])}${flag([A5, 545, 1407])}${flag([A5, 638, 1407])}`,
  over: () => tag([A5, 954, 1455], [A5, 1253, 1526], "5月 25 (月)\u00a0\u00a0 06:00"),
};

/* ---------- thirty minutes ---------- */

const HALF: Palette = {
  up: { fill: "#469a86", edge: "#469a86", wick: "#469a86" },
  down: { fill: "#de484e", edge: "#de484e", wick: "#de484e" },
};
const HALF_A: Candle[] = [
  [192, 600, 612, 637, 637, 0, 12], [209, 625, 636, 643, 653, 0, 17], [231, 640, 643, 665, 696, 0, 17], [251, 656, 661, 667, 689, 1, 16], [267, 649, 659, 662, 674, 0, 14],
  [289, 659, 661, 707, 712, 0, 20], [310, 688, 698, 706, 719, 1, 15], [326, 681, 695, 698, 708, 1, 14], [340, 652, 657, 674, 700, 0, 14], [354, 643, 673, 680, 683, 0, 14],
  [369, 672, 679, 685, 704, 0, 14], [385, 681, 685, 697, 703, 0, 14], [402, 686, 696, 722, 737, 0, 16], [422, 697, 699, 722, 722, 1, 14], [437, 695, 699, 761, 763, 0, 14],
  [452, 696, 698, 761, 767, 1, 14], [467, 679, 698, 767, 770, 0, 14], [482, 700, 721, 767, 773, 1, 14], [497, 703, 710, 722, 725, 1, 12], [513, 683, 691, 711, 747, 1, 14],
  [529, 690, 691, 713, 716, 0, 14], [544, 699, 715, 723, 726, 0, 14], [559, 698, 723, 756, 757, 0, 14], [574, 738, 745, 755, 768, 1, 14], [590, 740, 745, 764, 783, 0, 12],
  [609, 757, 762, 782, 796, 0, 14], [625, 765, 780, 791, 797, 0, 14], [640, 773, 790, 814, 816, 0, 13], [657, 805, 812, 827, 829, 0, 14], [673, 805, 820, 828, 831, 1, 12],
  [689, 796, 805, 820, 823, 1, 14], [704, 793, 805, 826, 836, 0, 12], [732, 824, 825, 928, 991, 0, 32], [769, 853, 868, 928, 933, 1, 23], [793, 841, 866, 869, 873, 0, 16],
  [817, 865, 869, 877, 905, 0, 16], [840, 811, 847, 878, 880, 1, 20], [863, 821, 846, 849, 871, 0, 15], [889, 823, 848, 873, 885, 0, 24], [924, 840, 863, 874, 893, 1, 30],
  [964, 801, 838, 864, 899, 1, 30], [1002, 799, 838, 873, 877, 0, 26], [1043, 856, 872, 951, 1028, 0, 36], [1091, 933, 949, 1006, 1032, 0, 36], [1135, 989, 1005, 1030, 1074, 0, 37],
  [1175, 1014, 1028, 1043, 1052, 0, 26], [1206, 972, 996, 1043, 1043, 1, 24], [1234, 985, 996, 1004, 1006, 0, 17], [1254, 993, 1003, 1040, 1045, 0, 13], [1271, 1024, 1024, 1040, 1043, 1, 14],
  [1289, 991, 1003, 1026, 1037, 1, 14], [1303, 987, 1003, 1019, 1026, 0, 13], [1320, 1016, 1019, 1028, 1037, 0, 14], [1335, 997, 998, 1028, 1028, 1, 12], [1350, 1001, 1010, 1014, 1020, 0, 14],
  [1364, 1004, 1012, 1021, 1027, 0, 14], [1380, 1006, 1007, 1021, 1022, 1, 14], [1394, 1005, 1007, 1015, 1018, 0, 13], [1409, 983, 1014, 1022, 1031, 0, 14], [1424, 975, 979, 1022, 1024, 1, 14],
  [1440, 944, 952, 980, 992, 1, 14], [1454, 937, 941, 952, 953, 1, 13], [1470, 936, 937, 940, 962, 1, 14], [1485, 921, 938, 949, 950, 0, 13], [1500, 936, 948, 952, 953, 0, 13],
  [1515, 946, 950, 963, 968, 0, 13], [1530, 956, 960, 980, 981, 0, 14], [1545, 956, 964, 980, 984, 1, 13], [1559, 926, 942, 967, 972, 1, 13],
];
const HALF_B: Candle[] = [
  [22, 904, 925, 944, 956, 1, 14], [38, 906, 925, 956, 963, 0, 13], [53, 905, 916, 956, 957, 1, 13], [68, 890, 912, 915, 930, 1, 12], [83, 881, 913, 926, 932, 0, 13],
  [98, 907, 907, 926, 927, 1, 13], [112, 879, 884, 907, 909, 1, 13], [127, 875, 884, 905, 906, 0, 13], [142, 884, 889, 904, 906, 1, 13], [157, 886, 889, 920, 921, 0, 13],
  [172, 898, 917, 932, 943, 0, 14], [187, 888, 889, 932, 944, 1, 14], [202, 861, 867, 890, 892, 1, 13], [218, 827, 831, 868, 896, 1, 14], [233, 828, 831, 863, 868, 0, 13],
  [248, 793, 820, 863, 863, 1, 13], [266, 799, 811, 821, 838, 1, 16], [289, 788, 796, 812, 857, 1, 20], [308, 791, 795, 803, 825, 0, 14], [323, 796, 801, 815, 825, 0, 13],
  [339, 806, 812, 849, 849, 0, 14], [354, 846, 848, 879, 888, 0, 13], [369, 867, 873, 878, 898, 1, 13], [383, 869, 873, 883, 899, 0, 13], [398, 876, 877, 883, 887, 1, 13],
  [413, 858, 870, 878, 882, 1, 14], [428, 857, 869, 875, 880, 0, 13], [442, 871, 874, 888, 889, 0, 13], [457, 886, 887, 893, 905, 0, 13], [472, 877, 879, 893, 895, 1, 14],
  [488, 877, 879, 886, 889, 0, 14], [503, 893, 904, 922, 922, 0, 13], [517, 819, 832, 922, 922, 1, 13], [532, 774, 803, 833, 844, 1, 13], [547, 756, 763, 804, 811, 1, 14],
  [561, 728, 735, 765, 782, 1, 14], [576, 675, 679, 736, 736, 1, 14], [591, 656, 659, 682, 710, 1, 14], [606, 646, 654, 661, 675, 1, 14], [622, 620, 641, 656, 657, 1, 13],
  [637, 601, 605, 642, 652, 1, 14], [651, 570, 590, 606, 612, 1, 14], [666, 568, 590, 598, 599, 0, 14], [681, 563, 565, 598, 598, 1, 13], [695, 565, 566, 580, 589, 0, 12],
  [711, 553, 573, 580, 580, 1, 14], [725, 528, 531, 574, 592, 1, 14], [740, 518, 520, 531, 551, 1, 13], [755, 505, 510, 521, 541, 1, 13], [770, 505, 510, 517, 548, 0, 12],
  [785, 468, 469, 516, 531, 1, 13], [800, 464, 469, 486, 489, 0, 13], [820, 398, 405, 486, 503, 1, 20], [847, 378, 404, 407, 443, 0, 20], [870, 386, 401, 408, 426, 1, 13],
  [885, 388, 391, 402, 421, 1, 13], [905, 330, 347, 393, 393, 1, 20], [928, 336, 347, 389, 389, 0, 16], [949, 354, 388, 435, 437, 0, 16], [977, 430, 433, 464, 539, 0, 26],
  [1001, 456, 462, 465, 484, 0, 13], [1024, 432, 457, 464, 511, 1, 24], [1055, 380, 400, 458, 473, 1, 26], [1087, 348, 380, 402, 415, 1, 24],
];
const NAVY = "#2a3d6e";
const halfHour: ChartSpec = {
  view: [207, 1033, 1640, 1077], scale: B1, right: B2, axis: [B2, 1393, 1391], gridLeft: [B1, 188, 0],
  gridStep: [71, 67.150, 20], gridTone: "#0e0e0f", prices: price(4800, 4420, 20), priceAt: [1466, 70, 67.150],
  times: [[B1, 355, "4", 1], [B1, 513, "12:00"], [B1, 705, "18:00"], [B1, 1059, "5"], [B1, 1365, "07:00"], [B1, 1516, "12:00"], [B2, 144, "18:00"], [B2, 340, "6"], [B2, 518, "07:00"], [B2, 667, "12:00"], [B2, 864, "18:00"]], timeY: 1422,
  body: () => svg`
    ${seg([B1, 331, 12], [B1, 331, 1385], NAVY, 2, "10 10")}${seg([B1, 1342, 12], [B1, 1342, 1385], NAVY, 2, "10 10")}${seg([B2, 495, 12], [B2, 495, 1385], NAVY, 2, "10 10")}
    ${candles(B1, HALF, 14, HALF_A)}${candles(B2, HALF, 14, HALF_B)}
    ${zone([B1, 150, -20], [B2, 1400, 107], RED_ZONE, RED_EDGE)}${seg([B1, 188, 74], [B2, 1393, 74], "rgba(226,71,79,.55)", 3)}
    ${label([B2, 1366, 103], "L1 4/1（ｄ）", "mark red")}
    ${zone([B1, 150, 540], [B2, 1400, 590], TEAL_ZONE, TEAL_EDGE)}
    ${seg([B1, 188, 593], [B2, 1393, 593], "#de6b70", 3, "10 10")}${seg([B1, 198, 592], [B2, 1393, 592], "#7db8c8", 1, "10 10")}
    ${seg([B1, 188, 722], [B2, 1393, 722], TEAL, 2)}${seg([B1, 188, 885], [B2, 1393, 885], "#cf7a33", 5, "6 10")}
    ${seg([B1, 188, 906], [B2, 1393, 906], GRAY, 4, "18 23")}${seg([B2, 111, 940], [B2, 415, 940], "#f2df55", 3)}
    ${label([B2, 1366, 567], "L4 or S2 4/30", "mark ice")}${label([B2, 1250, 566], "SR", "note mid bold")}${label([B2, 1369, 614], "4h", "note blue")}
    ${label([B2, 1366, 936], "L3 12/22（w）", "mark")}${label([B2, 1369, 1023], "S3 W btm 2 try", "note teal")}
    ${label([B2, 1366, 1060], "L2", "mark")}${label([B2, 1362, 1054], "4h S3 w bottom", "note blue bold")}
    ${seg([B1, 188, 1044], [B2, 1393, 1044], "#7fb9c6", 3, "4 6")}${seg([B1, 979, 1074], [B2, 1393, 1074], "#5aa9bb", 2, "10 11")}
    ${seg([B1, 188, 1083], [B2, 1393, 1083], "#e9b3b6", 1)}${seg([B1, 188, 1087], [B2, 1393, 1087], SOLID_RED, 5)}${seg([B1, 188, 1112], [B2, 1393, 1112], "#c3bdea", 2)}
    ${marker([B1, 1152, 1098])}${arrow([B1, 1223, 1153], ARROW_RED)}${label([B1, 1223, 1320], "4h", "note mid yellow")}${arrow([B1, 1223, 1390], "#357a8c", -1)}
    ${arrow([B2, 1039, 641], "#56b8d2")}${label([B2, 1039, 712], "240", "note teal mid")}
    ${seg([B2, 1391, 12], [B2, 1391, 1385], "#8d7a35", 3, "10 10")}
    <g fill="#dcdcdc" stroke="#0f0f0f" stroke-width="8" paint-order="stroke"><path d="M229 2010h22v27h-12v-17h-10z" /><circle cx="260" cy="2016" r="6" /><path d="M268 2010h15l-12 27h-12z" /></g>`,
  over: () => svg`
    ${tag([B2, 1047, 1392], [B2, 1392, 1442], "5月 07 (木)\u00a0\u00a0 07:30")}
    <rect x=${X(B2, 1394)} y=${Y(B2, 868)} width="75" height="26" rx="4" fill="#e8863c" />${label([B2, 1466, 885], "4,558", "ax hot")}`,
};

/* ---------- five minutes ---------- */

const FIVE: Palette = {
  up: { fill: "#c0b563", edge: "#fbf2ab", wick: "#eadb48" },
  down: { fill: "#606060", edge: "#b2b2b2", wick: "#b2b2b2" },
};
const FIVE_A: Candle[] = [
  [2, 331, 331, 399, 399, 1, 38], [56, 307, 331, 393, 447, 0, 47], [118, 178, 200, 393, 399, 1, 49], [175, 200, 201, 267, 299, 0, 42], [230, 220, 265, 342, 375, 0, 44],
  [280, 209, 228, 342, 346, 1, 34], [328, 220, 227, 369, 415, 0, 42], [376, 341, 365, 368, 414, 1, 37], [418, 356, 367, 401, 417, 0, 29], [457, 354, 400, 478, 478, 0, 34],
  [499, 309, 341, 475, 500, 1, 32], [536, 317, 341, 398, 406, 0, 26], [585, 374, 396, 580, 612, 0, 49], [644, 525, 578, 610, 622, 0, 42], [694, 563, 605, 609, 637, 1, 34],
  [738, 603, 605, 711, 727, 0, 34], [790, 691, 710, 822, 896, 0, 45], [849, 784, 820, 872, 914, 0, 49], [909, 873, 873, 1032, 1074, 0, 45], [977, 965, 1036, 1074, 1250, 0, 60],
  [1050, 851, 867, 1077, 1096, 1, 53], [1109, 765, 858, 867, 874, 1, 39], [1162, 819, 851, 859, 946, 1, 42], [1210, 840, 849, 909, 928, 0, 34], [1253, 853, 868, 910, 927, 1, 32],
  [1288, 835, 868, 894, 932, 0, 23], [1325, 888, 893, 957, 965, 0, 32], [1363, 853, 859, 958, 967, 1, 29], [1415, 699, 856, 858, 959, 1, 52], [1488, 820, 857, 1022, 1103, 0, 63],
];
const FIVE_B: Candle[] = [
  [11, 853, 853, 1019, 1045, 1, 41], [62, 722, 853, 864, 867, 0, 39], [107, 816, 822, 867, 922, 1, 32], [143, 800, 822, 826, 870, 0, 23], [196, 595, 610, 826, 910, 1, 59],
  [271, 586, 610, 669, 689, 0, 58], [339, 598, 652, 669, 688, 1, 48], [397, 548, 557, 654, 700, 1, 45], [457, 440, 507, 558, 680, 1, 50], [519, 467, 506, 538, 544, 0, 47],
  [583, 400, 472, 538, 558, 1, 53], [655, 415, 437, 473, 612, 1, 58], [723, 359, 384, 438, 468, 1, 48], [786, 272, 347, 383, 383, 1, 51], [845, 310, 347, 416, 427, 0, 40], [889, 348, 414, 440, 446, 0, 30],
];
const fiveMin: ChartSpec = {
  view: [1851, 1033, 2052, 1077], scale: B3, right: B4, axis: [B4, 1247, 1391], gridLeft: [B3, 8, 0],
  gridStep: [26, 68.400, 20], gridTone: "#121213", prices: price(4732, 4656, 4, 1), priceAt: [1320, 26, 68.370],
  times: [[B3, 239, "20:00"], [B3, 508, "20:30"], [B3, 798, "21:00"], [B3, 1170, "21:30"], [B3, 1423, "22:00"], [B4, 205, "22:30"], [B4, 593, "23:00"], [B4, 920, "23:30"], [B4, 1077, "7", 1]], timeY: 1422,
  body: () => svg`
    ${candles(B3, FIVE, 40, FIVE_A)}${candles(B4, FIVE, 40, FIVE_B)}
    ${zone([B3, -20, 1252], [B4, 1260, 1420], TEAL_ZONE, TEAL_EDGE)}
    ${seg([B4, 1233, 12], [B4, 1233, 1385], "#7a8793", 2, "10 10")}`,
};

/* ---------- chart panel ---------- */

@customElement("price-chart")
export class PriceChart extends LitElement {
  @property({ attribute: false }) spec!: ChartSpec;
  @property() heading = "";
  @property() volume = "";
  @property({ type: Boolean }) gold = false;
  @property({ type: Boolean }) rising = false;

  static styles = css`
    :host { display: block; position: relative; background: #000; border-radius: 8px; overflow: hidden; }
    .plot { display: block; width: 100%; height: auto; }
    text { font-family: Inter, "Noto Sans CJK JP", sans-serif; dominant-baseline: central; }
    .ax { font-size: 19px; fill: #cdcdcd; text-anchor: middle; }
    .ax.strong { font-weight: 600; fill: #e0e0e0; }
    .ax.hot { fill: #fff; }
    .mark { font-size: 27px; font-weight: 600; fill: #fff; text-anchor: end; }
    .mark.red { font-weight: 400; fill: #d9474e; }
    .mark.ice { fill: #93dde9; }
    .note { font-size: 20px; text-anchor: end; fill: #fff; }
    .note.mid { text-anchor: middle; }
    .note.bold { font-weight: 600; }
    .note.teal { fill: #4fb4cb; }
    .note.blue { fill: #478be8; }
    .note.pale { fill: #f0dcdc; }
    .note.yellow { fill: #f2df55; }
    .num { font-size: 18px; font-weight: 600; fill: #b9e6ee; text-anchor: middle; }
    .legend { position: absolute; left: 7px; top: 11px; height: 44px; padding: 0 10px; display: flex; align-items: center; gap: 20px; background: rgba(0, 0, 0, .5); font-size: 28px; line-height: 44px; color: #dadada; white-space: nowrap; }
    .low { top: 8px; gap: 14px; }
    .state { width: 33px; height: 33px; border-radius: 50%; background: rgba(102, 183, 166, .18); display: flex; align-items: center; justify-content: center; }
    .state::after { content: ""; width: 15px; height: 15px; border-radius: 50%; background: #66b7a6; }
    .volume { font-size: 23px; color: #cfcfcf; display: flex; gap: 3px; }
    .amount { color: #bdbdbd; }
    .rising { color: #46977f; }
    .coin { width: 34px; height: 34px; margin-right: -8px; display: block; }
  `;

  render() {
    const { view, axis, right, scale, gridLeft, gridStep, gridTone, prices, priceAt, times, timeY, body, over } = this.spec;
    const ax = X(axis[0], axis[1]);
    const ay = Y(axis[0], axis[2]);
    const endX = view[0] + view[2];
    const endY = view[1] + view[3];
    return html`
      <svg class="plot" viewBox=${view.join(" ")} role="img" aria-label=${this.heading}>
        <defs>
          <clipPath id="area"><rect x=${view[0]} y=${view[1]} width=${ax - view[0]} height=${ay - view[1]} /></clipPath>
          <clipPath id="disc"><circle r="15" /></clipPath>
        </defs>
        <g clip-path="url(#area)">
          ${Array.from({ length: gridStep[2] }, (_, i) => gridStep[0] + gridStep[1] * i).map((y) => seg([gridLeft[0], gridLeft[1], y], [axis[0], axis[1], y], gridTone, 2))}
          ${body()}
        </g>
        <path d=${`M${ax} ${view[1]}V${endY}M${view[0]} ${ay}H${endX}`} stroke="#858585" stroke-width="2" />
        ${prices.map((t, i) => (t ? svg`<text class="ax" x=${X(right, priceAt[0])} y=${Y(right, priceAt[1] + priceAt[2] * i)}>${t}</text>` : nothing))}
        ${times.map(([s, x, t, strong]) => svg`<text class=${strong ? "ax strong" : "ax"} x=${X(s, x)} y=${Y(scale, timeY)}>${t}</text>`)}
        ${over ? over() : nothing}
      </svg>
      <div class=${classMap({ legend: true, low: this.volume !== "" })}>
        ${this.gold ? html`<svg class="coin" viewBox="0 0 34 34"><circle cx="17" cy="17" r="17" fill="#cf9b37" /><path d="M13.500 9h7l2.500 5.500H11zM8 16h6.500l2.500 5.500H5zM19.500 16H26l3 5.500H17z" fill="#fff" /></svg>` : nothing}
        <span>${this.heading}</span><span class="state"></span>
        ${this.volume ? html`<span class="volume">出来高<span class=${this.rising ? "rising" : "amount"}>${this.volume}</span></span>` : nothing}
      </div>`;
  }
}

/* ---------- application shell ---------- */

const LEFT: [string, string, string?][] = [
  ["cross", "十字線", "on"], ["hray", "ライン"], ["fib", "フィボナッチ"], ["wave", "パターン"], ["longPos", "予測"], ["path", "ブラシ"], ["price", "テキスト"], ["heart", "アイコン"], ["", ""],
  ["ruler", "計測"], ["zoom", "ズーム"], ["", ""], ["magnet", "マグネット"], ["penLock", "描画モード維持"], ["lock", "ロック"], ["eye", "表示"], ["link", "同期", "light"], ["", ""], ["trash", "削除"],
];
const INTERVALS = ["15秒", "2分", "10分", "30分", "1時間", "4時間", "日", "週", "月", "5分"];
const LETTERS = ["0", "2", "4", "D", "M", "W", "6", "F", "P", "O", "C", "個", "V", "Z"];
const RANGES = ["1日", "5日", "1ヶ月", "3ヶ月", "6ヶ月", "年初来", "1年", "5年", "すべて"];
const DRAW = ["hray", "trend", "trendBox", "channel", "up", "price", "rect", "grid", "downArrow", "range", "longPos", "vrange", "path", "wave", "fib", "pin", "shortPos"];

@customElement("app-root")
export class AppRoot extends LitElement {
  static styles = [
    iconStyles,
    css`
      :host { display: block; box-sizing: border-box; min-height: 100vh; padding: 69px 102px 136px 103px; background: #fff; color: #dadada; font-family: Inter, "Noto Sans CJK JP", sans-serif; font-size: 25px; line-height: 32px; overflow: hidden; }
      .window { border: 1px solid #0a0a0a; border-radius: 26px; overflow: hidden; background: #2e2e2e; display: flex; flex-direction: column; box-shadow: inset 0 2px 0 #6a6a6a, 0 0 60px rgba(0, 0, 0, .28), 0 44px 70px rgba(0, 0, 0, .5); }
      .title { height: 70px; background: #262626; display: grid; grid-template-columns: 1fr auto 1fr; align-items: center; box-shadow: inset 0 2px 0 #6a6a6a; }
      .lights { display: flex; gap: 15px; padding-left: 38px; }
      .light { width: 22px; height: 22px; border-radius: 50%; background: #ec6a5e; }
      .amber { background: #f4bf4f; }
      .green { background: #61c554; }
      .caption { margin: 0; font-size: 22px; font-weight: 600; color: #fff; }
      .tools { display: flex; justify-content: flex-end; gap: 34px; padding-right: 19px; color: #fff; }
      .tools .icon { width: 44px; height: 44px; }
      .bar { height: 70px; background: #0f0f0f; display: flex; align-items: center; padding: 0 10px 0 20px; }
      .avatar { position: relative; width: 53px; height: 52px; border-radius: 50%; background: #000; border: 2px solid #333; box-sizing: border-box; }
      .avatar svg { width: 49px; height: 48px; border-radius: 50%; }
      .badge { position: absolute; left: 30px; top: -8px; height: 30px; min-width: 40px; box-sizing: border-box; padding: 0 8px; border-radius: 10px; background: #de454b; color: #fff; font-size: 22px; line-height: 30px; text-align: center; }
      .symbol { margin-left: 30px; width: 236px; height: 52px; border-radius: 26px; background: #3d3d3d; display: flex; align-items: center; justify-content: space-between; padding: 0 4px 0 21px; box-sizing: border-box; font-size: 26px; font-weight: 600; }
      .nib { width: 44px; height: 44px; border-radius: 50%; background: #0f0f0f; display: flex; align-items: center; justify-content: center; }
      .nib .icon { width: 44px; height: 44px; }
      .add { margin-left: 16px; }
      .rule { width: 2px; height: 40px; background: #454545; flex: none; }
      .r1 { margin: 0 12px 0 16px; }
      .intervals { width: 684px; display: flex; justify-content: space-between; }
      .interval { height: 63px; padding: 0 8px; border-radius: 8px; }
      .on { background: #3d3d3d; }
      .more { width: 36px; height: 63px; overflow: hidden; }
      .r2 { margin: 0 10px 0 20px; }
      .square { width: 63px; height: 63px; border-radius: 10px; }
      .style { margin: 0 4px 0 10px; }
      .r3 { margin: 0 18px 0 12px; }
      .ind { margin-right: 12px; }
      .tmpl { margin: 0 15px 0 13px; }
      .letters { width: 712px; display: flex; justify-content: space-between; }
      .few { width: 247px; }
      .letter { width: 40px; height: 40px; box-sizing: border-box; border: 2px solid #474747; border-radius: 50%; font-size: 18px; }
      .r4 { margin: 0 15px 0 26px; }
      .rew { margin: 0 11px 0 21px; }
      .undo { margin: 0 18px 0 29px; }
      .redo { color: #5a5a5a; }
      .fill { flex: 1; }
      .name { margin: 0 15px 0 20px; display: flex; flex-direction: column; }
      .name span { line-height: 28px; padding-top: 4px; }
      .name .save { color: #3d6ef5; font-size: 18px; line-height: 20px; padding: 0; }
      .layouts { margin-left: 10px; }
      .r5 { margin: 0 17px 0 26px; }
      .right { display: flex; gap: 18px; }
      .trade { margin: 0 15px 0 18px; width: 146px; height: 52px; box-sizing: border-box; border-radius: 26px; border: 2px solid #4a4a4a; background: #000; color: #fff; }
      .post { width: 96px; height: 52px; border-radius: 26px; background: #f0f0f0; color: #111; font-weight: 500; }
      .body { display: flex; padding: 7px 1px 0 0; }
      .rail { width: 95px; box-sizing: border-box; background: #0f0f0f; border-radius: 0 8px 0 0; padding: 15px 0 40px; display: flex; flex-direction: column; align-items: center; gap: 7px; }
      .sep { width: 72px; height: 2px; margin: 8px 0; background: #474747; }
      .light-on { background: #f0f0f0; color: #111; }
      .main { flex: 1; min-width: 0; margin: 0 7px 0 8px; display: flex; flex-direction: column; gap: 3px; }
      .row { display: grid; gap: 4px; }
      .three { grid-template-columns: minmax(0, 682fr) minmax(0, 1151fr) minmax(0, 1855fr); }
      .two { grid-template-columns: minmax(0, 1640fr) minmax(0, 2052fr); }
      .foot { height: 69px; background: #0f0f0f; border-radius: 8px; display: flex; align-items: center; }
      .ranges { display: flex; gap: 10px; padding-left: 19px; }
      .range { padding: 0 8px; height: 60px; }
      .r6 { margin: 0 17px 0 12px; }
      .draw { height: 69px; background: #1f1f1f; border-radius: 10px; display: flex; align-items: center; padding-left: 15px; }
      .grip { width: 16px; height: 28px; margin-right: 12px; fill: #4d4d4d; }
      .shape { width: 70px; height: 60px; }
      .time { margin-left: 97px; width: 212px; height: 60px; white-space: nowrap; }
      .r7 { margin: 0 17px 0 13px; }
      .expand { margin-right: 18px; }
      .side { width: 82px; border-radius: 8px 0 0 0; padding: 15px 0 13px; gap: 20px; }
      .round { border-radius: 50%; }
      .news { position: relative; }
      .news .badge { left: 10px; top: -6px; padding: 0 6px; border-radius: 14px; }
      .side .sep { width: 66px; margin: 0; }
    `,
  ];

  private iconButton(name: string, label: string, cls = "") {
    return html`<button class=${cls} aria-label=${label}>${icon(name)}</button>`;
  }

  render() {
    return html`
      <div class="window">
        <header class="title">
          <div class="lights"><span class="light"></span><span class="light amber"></span><span class="light green"></span></div>
          <h1 class="caption">Gold Oanda X5 Windows - XAUUSD 4,708 ▲ +3.3% GOLD Oanda</h1>
          <div class="tools">
            ${this.iconButton("tabSearch", "タブを検索")}
            <button aria-label="メニュー"><svg class="icon" viewBox="0 0 28 28">${[7.5, 14, 20.5].map((x) => svg`<circle class="solid" cx=${x} cy="14" r="1.800" />`)}</svg></button>
          </div>
        </header>
        <nav class="bar" aria-label="ツールバー">
          <button class="avatar" aria-label="プロフィール">
            <svg viewBox="0 0 49 48" aria-hidden="true"><path d="M6 12h36M6 24h36M12 4v40M36 4v40" stroke="#1f1f1f" fill="none" /><path d="M2 32h6M38 32h8" stroke="#4a4184" stroke-width="2" fill="none" /><path d="M15 46l3-14 2-10 3-20" stroke="#a34a22" stroke-width="1" fill="none" /></svg>
            <span class="badge">11</span>
          </button>
          <button class="symbol"><span>XAUUSD</span><span class="nib">${icon("pen")}</span></button>
          ${this.iconButton("plus", "追加", "add")}
          <span class="rule r1"></span>
          <div class="intervals">${INTERVALS.map((t) => html`<button class=${classMap({ interval: true, on: t === "日" })}>${t}</button>`)}</div>
          ${this.iconButton("down", "時間足", "more")}
          <span class="rule r2"></span>
          ${this.iconButton("candles", "ローソク足", "square on")}
          ${this.iconButton("candlesWide", "チャートタイプ", "square style")}
          ${this.iconButton("down", "その他のタイプ", "more")}
          <span class="rule r3"></span>
          ${this.iconButton("indicators", "インジケーター", "ind")}
          ${this.iconButton("down", "お気に入り", "more")}
          ${this.iconButton("templates", "テンプレート", "tmpl")}
          <div class="letters">${LETTERS.map((t) => html`<button class="letter">${t}</button>`)}</div>
          <span class="rule r4"></span>
          ${this.iconButton("alert", "アラート")}
          ${this.iconButton("rewind", "リプレイ", "rew")}
          ${this.iconButton("down", "リプレイ設定", "more")}
          ${this.iconButton("undo", "元に戻す", "undo")}
          ${this.iconButton("redo", "やり直す", "redo")}
          <span class="fill"></span>
          ${this.iconButton("layout", "レイアウト")}
          <button class="name"><span>GOLD Oanda</span><span class="save">保存</span></button>
          ${this.iconButton("down", "レイアウト一覧", "more")}
          <div class="letters few layouts">${[0, 1, 2, 3, 4].map(() => html`<button class="letter">C</button>`)}</div>
          <span class="rule r5"></span>
          <div class="right">
            ${this.iconButton("quick", "クイック検索")}${this.iconButton("hex", "設定")}${this.iconButton("full", "全画面")}${this.iconButton("camera", "スナップショット")}
          </div>
          <button class="trade">トレード</button>
          <button class="post">投稿</button>
        </nav>
        <div class="body">
          <aside class="rail">
            ${LEFT.map(([name, label, state]) =>
              name
                ? html`<button class=${classMap({ square: true, on: state === "on", "light-on": state === "light" })} aria-label=${label}>${icon(name)}</button>`
                : html`<span class="sep"></span>`
            )}
            <span class="fill"></span>
            ${this.iconButton("star", "お気に入りツール", "square light-on")}
          </aside>
          <main class="main">
            <div class="row three">
              <price-chart .spec=${weekly} heading="XAUUSD · 1週"></price-chart>
              <price-chart .spec=${daily} heading="XAUUSD · 1日 · OANDA"></price-chart>
              <price-chart .spec=${fourHours} heading="XAUUSD · 4時間 · OANDA"></price-chart>
            </div>
            <div class="row two">
              <price-chart .spec=${halfHour} heading="XAUUSD · 30 · OANDA" volume="30.66 K" rising></price-chart>
              <price-chart .spec=${fiveMin} heading="XAUUSD · 5 · OANDA" volume="2.64 K" gold></price-chart>
            </div>
            <footer class="foot">
              <div class="ranges">${RANGES.map((t) => html`<button class="range">${t}</button>`)}</div>
              <span class="rule r6"></span>
              ${this.iconButton("goto", "日付へ移動")}
              <span class="fill"></span>
              <div class="draw">
                <svg class="grip" viewBox="0 0 16 28" aria-hidden="true">${[3, 13].map((x) => [3, 14, 25].map((y) => svg`<circle cx=${x} cy=${y} r="2.500" />`))}</svg>
                ${DRAW.map((name) => this.iconButton(name, name, "shape"))}
              </div>
              <button class="time">23:28:07 UTC+9</button>
              <span class="rule r7"></span>
              ${this.iconButton("corner", "最大化", "expand")}
            </footer>
          </main>
          <aside class="rail side">
            ${this.iconButton("list", "ウォッチリスト", "square")}
            <button class="square news" aria-label="アラート">${icon("clock")}<span class="badge">99+</span></button>
            ${this.iconButton("layers", "データウィンドウ", "square")}
            ${this.iconButton("chat", "チャット", "square")}
            <span class="fill"></span>
            ${this.iconButton("radar", "スクリーナー", "square")}
            ${this.iconButton("peak", "アイデア", "square")}
            ${this.iconButton("calendar", "カレンダー", "square")}
            ${this.iconButton("rss", "ニュース", "square")}
            ${this.iconButton("bell", "通知", "square")}
            ${this.iconButton("apps", "アプリ", "square round light-on")}
            <span class="sep"></span>
            ${this.iconButton("help", "ヘルプ", "square")}
          </aside>
        </div>
      </div>`;
  }
}
